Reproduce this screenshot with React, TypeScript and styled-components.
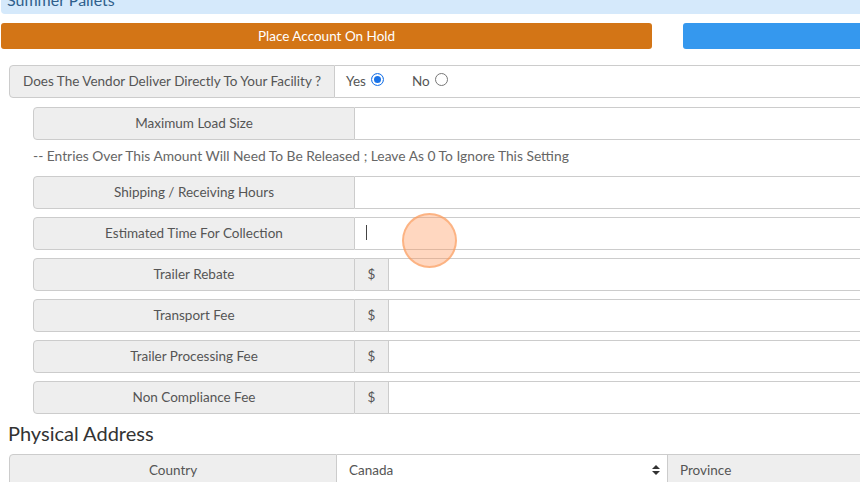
import React from "react";
import styled, { createGlobalStyle } from "styled-components";

const Global = createGlobalStyle`
  html, body { margin: 0; padding: 0; background: #fff; }
  body { font-family: "Lato", "Liberation Sans", sans-serif; color: #555; }
  * { box-sizing: border-box; }
`;

const Page = styled.div`
  width: 860px;
  height: 482px;
  overflow: hidden;
  position: relative;
`;

const Content = styled.div`
  width: 920px;
`;

const Banner = styled.div`
  height: 14px;
  margin-left: 1px;
  background: #d5e9fb;
  border-bottom-left-radius: 4px;
  overflow: hidden;
  padding-left: 6px;
`;

const BannerText = styled.div`
  font-size: 16px;
  line-height: 16px;
  margin-top: -8px;
  color: #2f5f8c;
`;

const ButtonRow = styled.div`
  display: flex;
  gap: 31px;
  margin: 9px 0 0 1px;
`;

const Btn = styled.div<{ $bg: string; $w: number }>`
  flex: none;
  width: ${(p) => p.$w}px;
  height: 26px;
  background: ${(p) => p.$bg};
  border-radius: 3px;
  color: #fff;
  font-size: 13.5px;
  display: flex;
  align-items: center;
  justify-content: center;
  padding-bottom: 1px;
`;

const Row = styled.div<{ $indent: number; $top: number }>`
  display: flex;
  height: 33px;
  margin-left: ${(p) => p.$indent}px;
  margin-top: ${(p) => p.$top}px;
`;

const Label = styled.div<{ $w: number }>`
  width: ${(p) => p.$w}px;
  flex: none;
  background: #eee;
  border: 1px solid #ccc;
  border-radius: 4px 0 0 4px;
  display: flex;
  align-items: center;
  justify-content: center;
  font-size: 13.5px;
  color: #555;
  white-space: nowrap;
  padding-bottom: 2px;
`;

const Field = styled.div`
  flex: 1;
  background: #fff;
  border: 1px solid #ccc;
  border-left: none;
  display: flex;
  align-items: center;
  font-size: 13.5px;
  color: #555;
  padding-left: 11px;
  padding-bottom: 2px;
`;

const Addon = styled.div`
  width: 34px;
  flex: none;
  background: #eee;
  border: 1px solid #ccc;
  border-left: none;
  display: flex;
  align-items: center;
  justify-content: center;
  font-size: 13.5px;
  color: #555;
  padding-bottom: 2px;
`;

const RadioLabel = styled.span`
  display: inline-flex;
  align-items: center;
  gap: 5px;
  margin-right: 28px;
  font-size: 13.5px;
`;

const RadioDot = styled.span<{ $on?: boolean }>`
  width: 13px;
  height: 13px;
  border-radius: 50%;
  display: inline-block;
  position: relative;
  top: -1px;
  border: 1px solid ${(p) => (p.$on ? "#1a73e8" : "#777")};
  background: #fff;
  box-shadow: ${(p) => (p.$on ? "inset 0 0 0 2px #fff, inset 0 0 0 6px #1a73e8" : "none")};
`;

const Help = styled.div`
  margin: 9px 0 0 33px;
  font-size: 13.8px;
  line-height: 14px;
  color: #666;
`;

const Caret = styled.span`
  width: 1px;
  height: 15px;
  background: #444;
  display: inline-block;
`;

const Heading = styled.div`
  font-size: 20px;
  line-height: 24px;
  margin: 7px 0 0 8px;
  color: #333;
`;

const Select = styled.div`
  width: 330px;
  flex: none;
  background: #fff;
  border-top: 1px solid #ccc;
  display: flex;
  align-items: center;
  justify-content: space-between;
  padding: 0 6px 2px 12px;
  font-size: 13.5px;
  color: #555;
`;

const SideLabel = styled.div`
  flex: 1;
  background: #eee;
  border-top: 1px solid #ccc;
  border-left: 1px solid #ccc;
  display: flex;
  align-items: center;
  padding: 0 0 2px 12px;
  font-size: 13.5px;
  color: #555;
`;

const Touch = styled.div`
  position: absolute;
  left: 402px;
  top: 213px;
  width: 55px;
  height: 55px;
  border-radius: 50%;
  background: rgba(255, 150, 90, 0.38);
  border: 2px solid rgba(250, 150, 80, 0.55);
`;

const fees = ["Trailer Rebate", "Transport Fee", "Trailer Processing Fee", "Non Compliance Fee"];

export default function App() {
  return (
    <Page>
      <Global />
      <Content>
        <Banner>
          <BannerText>Summer Pallets</BannerText>
        </Banner>
        <ButtonRow>
          <Btn $bg="#d37516" $w={651}>Place Account On Hold</Btn>
          <Btn $bg="#3598ee" $w={240} />
        </ButtonRow>
        <Row $indent={9} $top={16}>
          <Label $w={326}>Does The Vendor Deliver Directly To Your Facility ?</Label>
          <Field>
            <RadioLabel>Yes <RadioDot $on /></RadioLabel>
            <RadioLabel>No <RadioDot /></RadioLabel>
          </Field>
        </Row>
        <Row $indent={33} $top={9}>
          <Label $w={322}>Maximum Load Size</Label>
          <Field />
        </Row>
        <Help>-- Entries Over This Amount Will Need To Be Released ; Leave As 0 To Ignore This Setting</Help>
        <Row $indent={33} $top={13}>
          <Label $w={322}>Shipping / Receiving Hours</Label>
          <Field />
        </Row>
        <Row $indent={33} $top={8}>
          <Label $w={322}>Estimated Time For Collection</Label>
          <Field><Caret /></Field>
        </Row>
        {fees.map((f) => (
          <Row key={f} $indent={33} $top={8}>
            <Label $w={322}>{f}</Label>
            <Addon>$</Addon>
            <Field />
          </Row>
        ))}
        <Heading>Physical Address</Heading>
        <Row $indent={9} $top={9}>
          <Label $w={328}>Country</Label>
          <Select>
            <span>Canada</span>
            <svg width="10" height="12" viewBox="0 0 10 12">
              <path d="M5 1 L9 5 H1 Z M5 11 L9 7 H1 Z" fill="#333" />
            </svg>
          </Select>
          <SideLabel>Province</SideLabel>
        </Row>
      </Content>
      <Touch />
    </Page>
  );
}
